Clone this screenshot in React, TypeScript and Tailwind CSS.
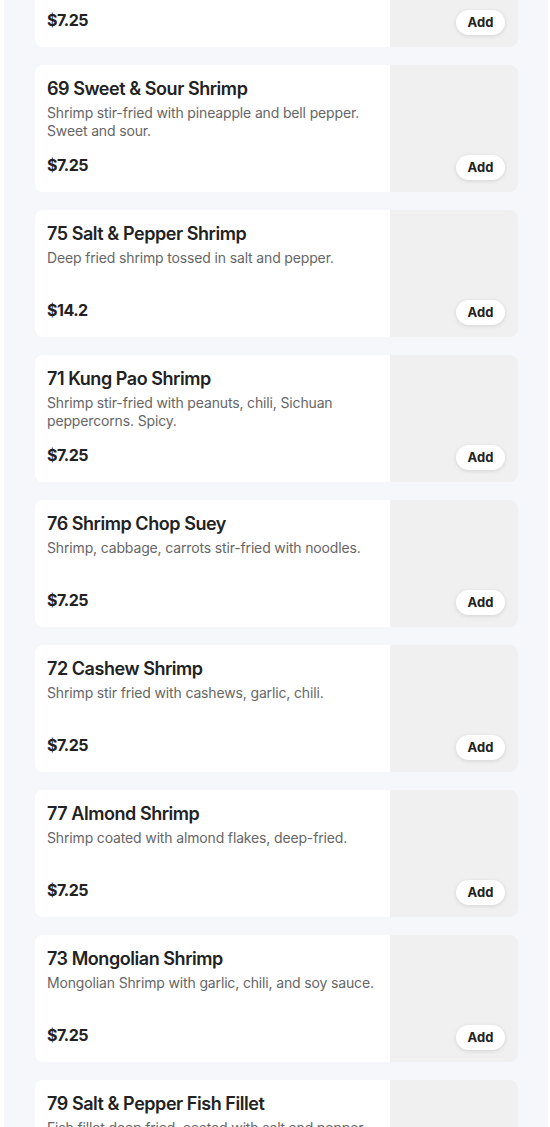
import React from "react";

type Item = { name: string; desc: string; price: string };

const items: Item[] = [
  { name: "74 Shrimp with Broccoli", desc: "Shrimp stir-fried with broccoli in brown sauce.", price: "$7.25" },
  { name: "69 Sweet & Sour Shrimp", desc: "Shrimp stir-fried with pineapple and bell pepper. Sweet and sour.", price: "$7.25" },
  { name: "75 Salt & Pepper Shrimp", desc: "Deep fried shrimp tossed in salt and pepper.", price: "$14.2" },
  { name: "71 Kung Pao Shrimp", desc: "Shrimp stir-fried with peanuts, chili, Sichuan peppercorns. Spicy.", price: "$7.25" },
  { name: "76 Shrimp Chop Suey", desc: "Shrimp, cabbage, carrots stir-fried with noodles.", price: "$7.25" },
  { name: "72 Cashew Shrimp", desc: "Shrimp stir fried with cashews, garlic, chili.", price: "$7.25" },
  { name: "77 Almond Shrimp", desc: "Shrimp coated with almond flakes, deep-fried.", price: "$7.25" },
  { name: "73 Mongolian Shrimp", desc: "Mongolian Shrimp with garlic, chili, and soy sauce.", price: "$7.25" },
  { name: "79 Salt & Pepper Fish Fillet", desc: "Fish fillet deep fried, coated with salt and pepper.", price: "$7.25" },
];

function Card({ item }: { item: Item }) {
  return (
    <div className="flex h-[127px] w-[483px] shrink-0 rounded-[8px] bg-white">
      <div className="flex w-[355px] flex-col justify-between pl-[12px] pr-[10px] pt-[12px] pb-[16px]">
        <div>
          <div className="text-[18px] leading-[24px] font-semibold text-[#222222] tracking-[-0.45px]">{item.name}</div>
          <div className="mt-[3px] text-[14px] leading-[18px] text-[#666666] tracking-[-0.15px]">{item.desc}</div>
        </div>
        <div className="text-[16px] leading-[22px] font-bold text-[#222222] tracking-[-0.5px]">{item.price}</div>
      </div>
      <div className="relative flex flex-1 items-end justify-end rounded-r-[8px] bg-[#f0f0f0] pr-[13px] pb-[12px]">
        <button className="h-[25px] w-[49px] rounded-full bg-white text-[13px] font-bold text-[#222222] shadow-[0_1px_4px_rgba(0,0,0,0.12)]">
          Add
        </button>
      </div>
    </div>
  );
}

export default function App() {
  return (
    <div
      className="h-[1127px] w-[550px] overflow-hidden bg-white"
      style={{ fontFamily: "Inter, 'Noto Sans', sans-serif" }}
    >
      <div className="ml-[4px] mr-[2px] h-full overflow-hidden bg-[#f6f7fb]">
        <div className="-mt-[80px] flex flex-col gap-[18px] pl-[31px]">
          {items.map((it) => (
            <Card key={it.name} item={it} />
          ))}
        </div>
      </div>
    </div>
  );
}
